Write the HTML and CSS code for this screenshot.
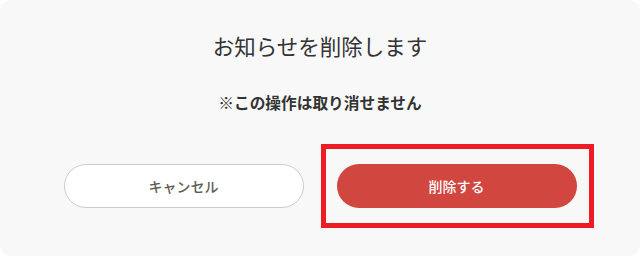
FILE: index.html
```html
<!DOCTYPE html>
<html lang="ja">
<head>
<meta charset="utf-8">
<link rel="stylesheet" href="styles.css">
</head>
<body>
<div class="dialog">
  <h1 class="title">お知らせを削除します</h1>
  <p class="note">※この操作は取り消せません</p>
  <div class="actions">
    <button class="btn btn-cancel">キャンセル</button>
    <button class="btn btn-delete">削除する</button>
  </div>
  <div class="highlight"></div>
</div>
</body>
</html>
```
FILE: styles.css
```css
html, body {
  margin: 0;
  padding: 0;
  background: #ffffff;
}
body {
  width: 640px;
  height: 256px;
  font-family: "Noto Sans CJK JP", "Noto Sans", sans-serif;
}
.dialog {
  position: relative;
  box-sizing: border-box;
  width: 640px;
  height: 256px;
  background: #f8f8f8;
  border-radius: 12px;
  display: flex;
  flex-direction: column;
  align-items: center;
  padding-top: 30px;
}
.title {
  margin: 0;
  font-size: 21.5px;
  font-weight: 400;
  line-height: 32px;
  color: #333333;
}
.note {
  margin: 29px 0 0;
  font-size: 15.7px;
  font-weight: 700;
  line-height: 24px;
  color: #333333;
}
.actions {
  display: flex;
  gap: 33px;
  margin-top: 49px;
}
.btn {
  box-sizing: border-box;
  width: 240px;
  height: 44px;
  border-radius: 22px;
  font-family: "Noto Sans CJK JP", "Noto Sans", sans-serif;
  font-size: 14px;
  font-weight: 500;
  padding: 0;
  cursor: pointer;
}
.btn-cancel {
  background: #ffffff;
  border: 1px solid #cccccc;
  color: #5c5c55;
}
.btn-delete {
  background: #d1463f;
  border: none;
  color: #ffffff;
}
.highlight {
  position: absolute;
  left: 321px;
  top: 144px;
  width: 273px;
  height: 84px;
  box-sizing: border-box;
  border: 5px solid #ee1c25;
}
```
